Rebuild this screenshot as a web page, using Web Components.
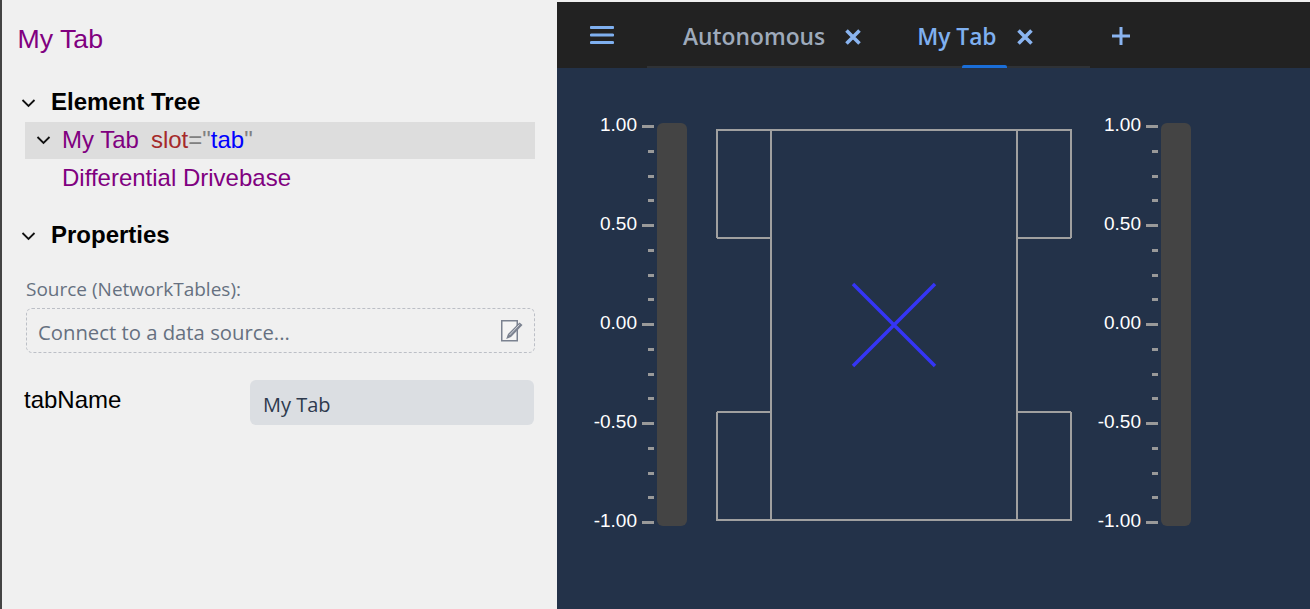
<!DOCTYPE html>
<html>
<head>
<meta charset="utf-8">
<style>
  html, body { margin: 0; height: 100%; background: #f0f0f0; overflow: hidden; }
</style>
</head>
<body>
<app-shell>
  <side-panel slot="side" title-text="My Tab">
    <tree-section label="Element Tree">
      <tree-row selected open><span>My Tab</span><attr-text name="slot" value="tab"></attr-text></tree-row>
      <tree-row>Differential Drivebase</tree-row>
    </tree-section>
    <tree-section label="Properties" class="props">
      <source-field label="Source (NetworkTables):" placeholder="Connect to a data source..."></source-field>
      <prop-row name="tabName" value="My Tab"></prop-row>
    </tree-section>
  </side-panel>
  <dash-view slot="main">
    <tab-bar>
      <tab-item>Autonomous</tab-item>
      <tab-item active>My Tab</tab-item>
    </tab-bar>
    <drive-view></drive-view>
  </dash-view>
</app-shell>

<script>
class AppShell extends HTMLElement {
  constructor() {
    super();
    this.attachShadow({ mode: 'open' }).innerHTML = `
      <style>
        :host { display: flex; width: 1310px; height: 609px; }
        .side { width: 555px; border-left: 2px solid #444; box-sizing: content-box; flex: none; }
        .main { flex: 1; padding-top: 2px; display: flex; flex-direction: column; }
      </style>
      <div class="side"><slot name="side"></slot></div>
      <div class="main"><slot name="main"></slot></div>`;
  }
}

class SidePanel extends HTMLElement {
  connectedCallback() {
    this.attachShadow({ mode: 'open' }).innerHTML = `
      <style>
        :host { display: block; font-family: "Liberation Sans", Arial, sans-serif; }
        h1 { margin: 0; padding: 24px 0 0 15.500px; font-size: 26.700px; line-height: 30px; font-weight: 400; color: #800080; }
        .body { padding: 31px 22px 0 16px; }
      </style>
      <h1>${this.getAttribute('title-text')}</h1>
      <div class="body"><slot></slot></div>`;
  }
}

class TreeSection extends HTMLElement {
  connectedCallback() {
    this.attachShadow({ mode: 'open' }).innerHTML = `
      <style>
        :host { display: block; margin-bottom: 22px; }
        .head { display: flex; align-items: center; height: 34px; padding-bottom: 3px; font-size: 24px; font-weight: 700; color: #000; }
        svg { width: 15px; height: 14px; margin: 2px 15px 0 3px; }
        .kids { display: block; }
      </style>
      <div class="head">
        <svg viewBox="0 0 15 14"><path d="M1.500 4l6 6 6-6" fill="none" stroke="#111" stroke-width="1.800"/></svg>
        <span>${this.getAttribute('label')}</span>
      </div>
      <div class="kids"><slot></slot></div>`;
  }
}

class TreeRow extends HTMLElement {
  connectedCallback() {
    const open = this.hasAttribute('open');
    this.attachShadow({ mode: 'open' }).innerHTML = `
      <style>
        :host { display: flex; align-items: center; height: 37px; margin-left: 7px; padding-left: 37px; position: relative;
          font-size: 24px; color: #800080; }
        :host([selected]) { background: #dddddd; height: 35px; padding-bottom: 2px; }
        svg { position: absolute; left: 11px; top: 11px; width: 15px; height: 14px; }
      </style>
      ${open ? '<svg viewBox="0 0 15 14"><path d="M1.500 4l6 6 6-6" fill="none" stroke="#111" stroke-width="1.800"/></svg>' : ''}
      <slot></slot>`;
  }
}

class AttrText extends HTMLElement {
  connectedCallback() {
    this.attachShadow({ mode: 'open' }).innerHTML = `
      <style>
        :host { display: inline; margin-left: 12px; color: #a52a2a; }
        .p { color: #808080; } .v { color: #0000ff; }
      </style>${this.getAttribute('name')}<span class="p">="</span><span class="v">${this.getAttribute('value')}</span><span class="p">"</span>`;
  }
}

class SourceField extends HTMLElement {
  connectedCallback() {
    this.attachShadow({ mode: 'open' }).innerHTML = `
      <style>
        :host { display: block; margin: 22px 0 0 8px; font-family: "Open Sans", "Noto Sans", sans-serif; }
        label { display: block; font-size: 19px; line-height: 24px; color: #667080; margin-bottom: 7px; }
        .box { display: flex; align-items: center; justify-content: space-between; height: 43px; padding: 0 11px 0 11px;
          border: 1px dashed #bcbfc6; border-radius: 6px; font-size: 20.300px; color: #667080; }
        .box span { padding-top: 2px; }
        svg { width: 23px; height: 23px; }
      </style>
      <label>${this.getAttribute('label')}</label>
      <div class="box">
        <span>${this.getAttribute('placeholder')}</span>
        <svg viewBox="0 0 23 23">
          <rect x="1.750" y="1.750" width="15.500" height="20" fill="#f4f4f4" stroke="#7b8290" stroke-width="1.500"/>
          <path d="M19.500 3.500l3 2.600L11 18l-4.800 2L8 15z" fill="#7b8290"/>
          <path d="M9.500 16l10-10.500" stroke="#d4d7dc" stroke-width="1"/>
        </svg>
      </div>`;
  }
}

class PropRow extends HTMLElement {
  connectedCallback() {
    this.attachShadow({ mode: 'open' }).innerHTML = `
      <style>
        :host { display: flex; justify-content: space-between; margin: 27px 1px 0 6px; }
        .name { font-size: 24px; line-height: 40px; color: #000; }
        .val { width: 271px; height: 41px; padding: 4px 0 0 13px; display: flex; align-items: center; background: #dbdee2;
          border-radius: 6px; font-family: "Open Sans", "Noto Sans", sans-serif; font-size: 20px; color: #2e3a4d; }
      </style>
      <span class="name">${this.getAttribute('name')}</span>
      <div class="val">${this.getAttribute('value')}</div>`;
  }
}

class DashView extends HTMLElement {
  constructor() {
    super();
    this.attachShadow({ mode: 'open' }).innerHTML = `
      <style>:host { display: flex; flex-direction: column; flex: 1; background: #233249; }</style>
      <slot></slot>`;
  }
}

class TabBar extends HTMLElement {
  constructor() {
    super();
    this.attachShadow({ mode: 'open' }).innerHTML = `
      <style>
        :host { display: flex; height: 66px; background: #222; flex: none; align-items: stretch; }
        .menu { width: 90px; flex: none; display: flex; padding: 24px 0 0 33px; box-sizing: border-box; }
        .menu svg { width: 24px; height: 20px; }
        .tabs { display: flex; width: 443px; flex: none; border-bottom: 2px solid #2f3236; box-sizing: border-box; padding-left: 36px; }
        .plus { width: 24px; height: 24px; margin: 22px 0 0 19px; }
      </style>
      <div class="menu">
        <svg viewBox="0 0 24 20"><path d="M1.500 1.500h21M1.500 9h21M1.500 16.500h21" stroke="#7fb0f0" stroke-width="3.200" stroke-linecap="round" fill="none"/></svg>
      </div>
      <div class="tabs"><slot></slot></div>
      <svg class="plus" viewBox="0 0 24 24"><path d="M12 3v18M3 12h18" stroke="#8ab4f0" stroke-width="3" fill="none"/></svg>`;
  }
}

class TabItem extends HTMLElement {
  connectedCallback() {
    this.attachShadow({ mode: 'open' }).innerHTML = `
      <style>
        :host { display: flex; position: relative; padding-top: 3px; margin-right: 55px; align-items: center; height: 66px; box-sizing: border-box;
          font-family: "Open Sans", "Noto Sans", sans-serif; font-size: 22.800px; font-weight: 600; color: #9eaabb; }
        :host([active]) { color: #7fb0f0; }
        :host([active])::after { content: ""; position: absolute; left: 45px; width: 45px; bottom: 0; height: 3px; background: #1a6ed8; border-radius: 2px 2px 0 0; }
        svg { width: 18px; height: 18px; margin-left: 19px; }
      </style>
      <slot></slot>
      <svg viewBox="0 0 18 18"><path d="M2.500 2.500l13 13M15.500 2.500l-13 13" stroke="#8ab4f0" stroke-width="3.600" fill="none"/></svg>`;
  }
}

class GaugeBar extends HTMLElement {
  connectedCallback() {
    let ticks = '';
    for (let i = 0; i <= 16; i++) {
      const major = i % 4 === 0;
      const value = (1 - i / 8).toFixed(2);
      ticks += `<div class="tick ${major ? 'major' : ''}">${major ? `<span>${value}</span>` : ''}<i></i></div>`;
    }
    this.attachShadow({ mode: 'open' }).innerHTML = `
      <style>
        :host { display: flex; width: 94px; height: 403px; flex: none; color: #fff;
          font-family: "Liberation Sans", Arial, sans-serif; font-size: 19px; }
        .scale { flex: 1; display: flex; flex-direction: column; justify-content: space-between; padding-right: 3px; height: 399px; margin-top: 2px; }
        .tick { height: 3px; display: flex; justify-content: flex-end; position: relative; }
        .tick i { display: block; width: 6px; height: 3px; background: #999; }
        .tick.major i { width: 12px; }
        .tick span { position: absolute; right: 17px; top: -11px; line-height: 22px; }
        .bar { width: 30px; background: #444; border-radius: 6px; flex: none; }
      </style>
      <div class="scale">${ticks}</div>
      <div class="bar"></div>`;
  }
}

class DriveView extends HTMLElement {
  constructor() {
    super();
    this.attachShadow({ mode: 'open' }).innerHTML = `
      <style>
        :host { display: flex; flex: 1; padding: 55px 0 0 36px; align-items: flex-start; }
        svg { width: 356px; height: 392px; margin: 6px 25px 0 29px; flex: none; }
      </style>
      <gauge-bar></gauge-bar>
      <svg viewBox="0 0 356 392">
        <g fill="none" stroke="#a0a0a0" stroke-width="2">
          <path d="M1 109V1H355V109M1 283V391H355V283"/>
          <path d="M55 1V391M301 1V391M1 109H55M301 109H355M1 283H55M301 283H355"/>
        </g>
        <path d="M137 155l82 82M219 155l-82 82" stroke="#3535f5" stroke-width="3.500" fill="none"/>
      </svg>
      <gauge-bar></gauge-bar>`;
  }
}

customElements.define('app-shell', AppShell);
customElements.define('side-panel', SidePanel);
customElements.define('tree-section', TreeSection);
customElements.define('tree-row', TreeRow);
customElements.define('attr-text', AttrText);
customElements.define('source-field', SourceField);
customElements.define('prop-row', PropRow);
customElements.define('dash-view', DashView);
customElements.define('tab-bar', TabBar);
customElements.define('tab-item', TabItem);
customElements.define('gauge-bar', GaugeBar);
customElements.define('drive-view', DriveView);
</script>
</body>
</html>
